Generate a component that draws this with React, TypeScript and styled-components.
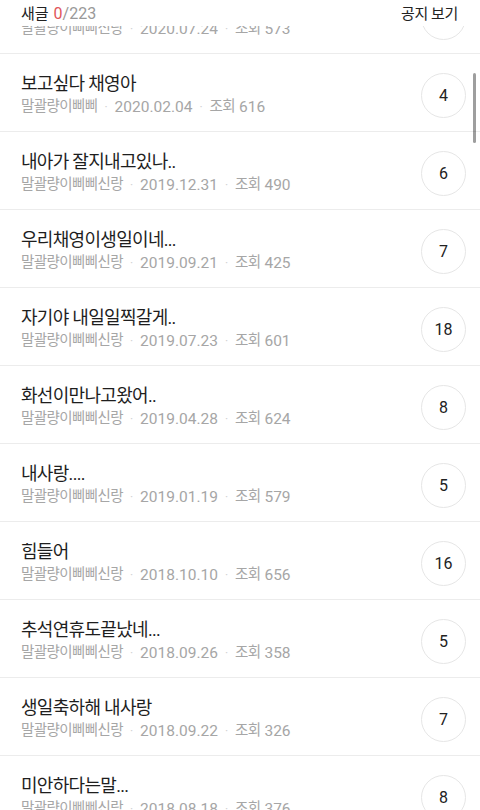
import React from "react";
import styled, { createGlobalStyle } from "styled-components";

const Global = createGlobalStyle`
  html, body { margin: 0; padding: 0; background: #fff; }
  body { font-family: "Noto Sans CJK KR", "Noto Sans", sans-serif; -webkit-font-smoothing: antialiased; }
`;

const Screen = styled.div`
  position: relative;
  width: 480px;
  height: 810px;
  overflow: hidden;
  background: #fff;
`;

const Header = styled.header`
  position: absolute;
  top: 0;
  left: 0;
  right: 0;
  height: 26px;
  background: #fff;
  z-index: 2;
  display: flex;
  align-items: center;
  justify-content: space-between;
  padding: 0 22px 2px 21px;
  box-sizing: border-box;
  font-size: 15px;
`;

const Counter = styled.div`
  color: #222;
  display: flex;
  gap: 5px;
`;

const New = styled.span`
  color: #e0555a;
  font-family: "Roboto", "Noto Sans CJK KR", sans-serif;
  font-size: 16px;
`;

const Total = styled.span`
  color: #999;
  font-family: "Roboto", "Noto Sans CJK KR", sans-serif;
  font-size: 16px;
`;

const NoticeLink = styled.div`
  color: #222;
  letter-spacing: -0.3px;
`;

const List = styled.ul`
  list-style: none;
  margin: -25px 0 0;
  padding: 0;
`;

const Row = styled.li`
  height: 78px;
  box-sizing: border-box;
  border-top: 1px solid #ececec;
  display: flex;
  align-items: center;
  justify-content: space-between;
  padding: 0 14px 0 21px;
`;

const Texts = styled.div`
  display: flex;
  flex-direction: column;
  gap: 2px;
  padding-top: 4px;
`;

const Title = styled.div`
  font-family: "Roboto", "Noto Sans CJK KR", sans-serif;
  font-size: 18px;
  color: #1e1e1e;
  line-height: 22px;
  letter-spacing: -0.7px;
`;

const Meta = styled.div`
  font-family: "Roboto", "Noto Sans CJK KR", sans-serif;
  font-size: 15.5px;
  color: #a6a6a6;
  line-height: 20px;
  display: flex;
  align-items: center;
`;

const Hangul = styled.span`
  font-size: 14.5px;
  letter-spacing: -0.6px;
`;

const Dot = styled.span`
  color: #d2d2d2;
  margin: 0 7px;
  font-size: 12px;
`;

const Count = styled.div`
  width: 45px;
  height: 45px;
  border-radius: 50%;
  border: 1px solid #e6e6e6;
  box-sizing: border-box;
  display: flex;
  align-items: center;
  justify-content: center;
  font-family: "Roboto", sans-serif;
  font-size: 16px;
  color: #222;
  margin-top: 6px;
`;

const ScrollThumb = styled.div`
  position: absolute;
  right: 4px;
  top: 73px;
  width: 3px;
  height: 70px;
  border-radius: 2px;
  background: rgba(0, 0, 0, 0.38);
  z-index: 3;
`;

type Post = { title: string; author: string; date: string; views: number; comments: number };

const posts: Post[] = [
  { title: "사랑해", author: "말괄량이삐삐신랑", date: "2020.07.24", views: 573, comments: 3 },
  { title: "보고싶다 채영아", author: "말괄량이삐삐", date: "2020.02.04", views: 616, comments: 4 },
  { title: "내아가 잘지내고있나..", author: "말괄량이삐삐신랑", date: "2019.12.31", views: 490, comments: 6 },
  { title: "우리채영이생일이네...", author: "말괄량이삐삐신랑", date: "2019.09.21", views: 425, comments: 7 },
  { title: "자기야 내일일찍갈게..", author: "말괄량이삐삐신랑", date: "2019.07.23", views: 601, comments: 18 },
  { title: "화선이만나고왔어..", author: "말괄량이삐삐신랑", date: "2019.04.28", views: 624, comments: 8 },
  { title: "내사랑....", author: "말괄량이삐삐신랑", date: "2019.01.19", views: 579, comments: 5 },
  { title: "힘들어", author: "말괄량이삐삐신랑", date: "2018.10.10", views: 656, comments: 16 },
  { title: "추석연휴도끝났네...", author: "말괄량이삐삐신랑", date: "2018.09.26", views: 358, comments: 5 },
  { title: "생일축하해 내사랑", author: "말괄량이삐삐신랑", date: "2018.09.22", views: 326, comments: 7 },
  { title: "미안하다는말...", author: "말괄량이삐삐신랑", date: "2018.08.18", views: 376, comments: 8 },
];

export default function App() {
  return (
    <Screen>
      <Global />
      <Header>
        <Counter>
          <span>새글</span>
          <span>
            <New>0</New>
            <Total>/223</Total>
          </span>
        </Counter>
        <NoticeLink>공지 보기</NoticeLink>
      </Header>
      <List>
        {posts.map((p, i) => (
          <Row key={i}>
            <Texts>
              <Title>{p.title}</Title>
              <Meta>
                <Hangul>{p.author}</Hangul>
                <Dot>·</Dot>
                {p.date}
                <Dot>·</Dot>
                <Hangul>조회</Hangul>&nbsp;{p.views}
              </Meta>
            </Texts>
            <Count>{p.comments}</Count>
          </Row>
        ))}
      </List>
      <ScrollThumb />
    </Screen>
  );
}
